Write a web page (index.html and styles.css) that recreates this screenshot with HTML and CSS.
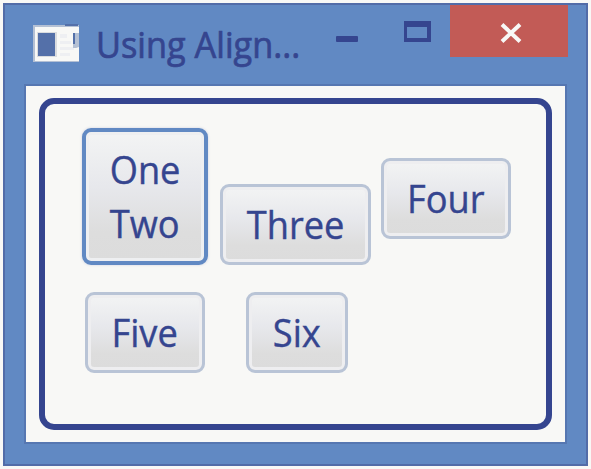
FILE: index.html
```html
<!DOCTYPE html>
<html lang="en">
<head>
<meta charset="utf-8">
<title>Using Alignment</title>
<link rel="stylesheet" href="styles.css">
</head>
<body>
<div class="window">
  <header class="titlebar">
    <svg class="app-icon" width="46" height="40" viewBox="0 0 46 40">
      <path d="M0 1H46V38H0Z" fill="#b4c0d4"/>
      <path d="M2 3H46V37H2Z" fill="#f8f8f6"/>
      <path d="M4 8H24V33H4Z" fill="#dadcdf"/>
      <path d="M5 9H22V32H5Z" fill="#5470a9"/>
      <path d="M27 10h7v4h-7zM27 17h11v3H27zM27 23h14v3H27zM27 29h10v3H27z" fill="#eeeff2"/>
      <path d="M32 0h13v2H32z" fill="#5470a9"/>
      <path d="M40 9h6v14l-3 1h-3z" fill="#b4c0d4"/>
      <path d="M40 9h2v11h-2z" fill="#5470a9"/>
    </svg>
    <h1 class="title">Using Align...</h1>
    <svg class="minimize" width="22" height="6" viewBox="0 0 22 6"><rect width="22" height="6" rx="1" fill="#35458f"/></svg>
    <svg class="maximize" width="27" height="21" viewBox="0 0 27 21"><path fill="#35458f" fill-rule="evenodd" d="M0 0H27V21H0ZM3 6V17H23V6Z"/></svg>
    <div class="close"><svg width="22" height="20" viewBox="0 0 22 20"><path d="M2 1.5L20 18.5M20 1.5L2 18.5" stroke="#f8f8f6" stroke-width="4"/></svg></div>
  </header>
  <main class="client">
    <div class="pane">
      <button class="btn focused"><span class="label">One<br>Two</span></button>
      <button class="btn three"><span class="label">Three</span></button>
      <button class="btn four"><span class="label">Four</span></button>
      <button class="btn five"><span class="label">Five</span></button>
      <button class="btn six"><span class="label">Six</span></button>
    </div>
  </main>
</div>
</body>
</html>
```
FILE: styles.css
```css
* { box-sizing: border-box; }
body { margin: 0; padding: 3px; height: 469px; background: #f8f8f6; overflow: hidden; font-family: "Open Sans", "Noto Sans", sans-serif; }
.window { width: 585px; height: 463px; background: #6189c3; border: 2px solid #526ca8; padding: 0 19px 20px; }
.titlebar { height: 79px; display: flex; align-items: flex-start; padding-left: 9px; }
.app-icon { margin-top: 19px; flex: none; }
.title { margin: 13px 0 0 17px; width: 222px; flex: none; font-size: 36px; line-height: 54px; font-weight: 400; color: #35458f; white-space: nowrap; transform: scaleX(.953); transform-origin: left; -webkit-text-stroke: .7px #35458f; }
.minimize { margin: 31px 0 0 18px; flex: none; }
.maximize { margin: 16px 0 0 46px; flex: none; }
.close { width: 118px; height: 52px; margin-left: 19px; flex: none; background: #c25b56; display: flex; align-items: center; justify-content: center; padding: 3px 0 0 3px; }
.client { width: 543px; height: 360px; border: 2px solid #5677b1; background: #f8f8f6; padding: 12px 13px; }
.pane { width: 513px; height: 332px; border: 6px solid #35458f; border-radius: 15px; padding: 24px 0 0 37px; display: grid; grid-template-columns: 126px 151px 129px; grid-template-rows: 137px 81px; column-gap: 12px; row-gap: 27px; align-content: start; }
.btn { appearance: none; height: 81px; padding: 0; border: 3px solid #b9c4d6; border-radius: 9px; background: linear-gradient(#f3f4f4, #e7e8ec 42%, #dddddd 78%, #dcdcdc); box-shadow: inset 0 0 0 3px #eeeef0; font: 39px/54px "Open Sans", "Noto Sans", sans-serif; color: #35458f; display: flex; align-items: center; justify-content: center; }
.focused { height: 137px; border: 4px solid #6189c3; box-shadow: inset 0 0 0 3px #eeeff1, 0 0 2px 1px #e5e6ec; }
.label { display: block; transform: translate(0, -1px) scaleX(.93); white-space: nowrap; text-align: left; -webkit-text-stroke: .4px #35458f; }
.three { align-self: end; margin-bottom: 0; }
.four { align-self: start; margin-top: 30px; margin-left: -2px; width: 130px; }
.five { width: 120px; margin-left: 3px; }
.six { width: 102px; margin-left: 26px; }
```
